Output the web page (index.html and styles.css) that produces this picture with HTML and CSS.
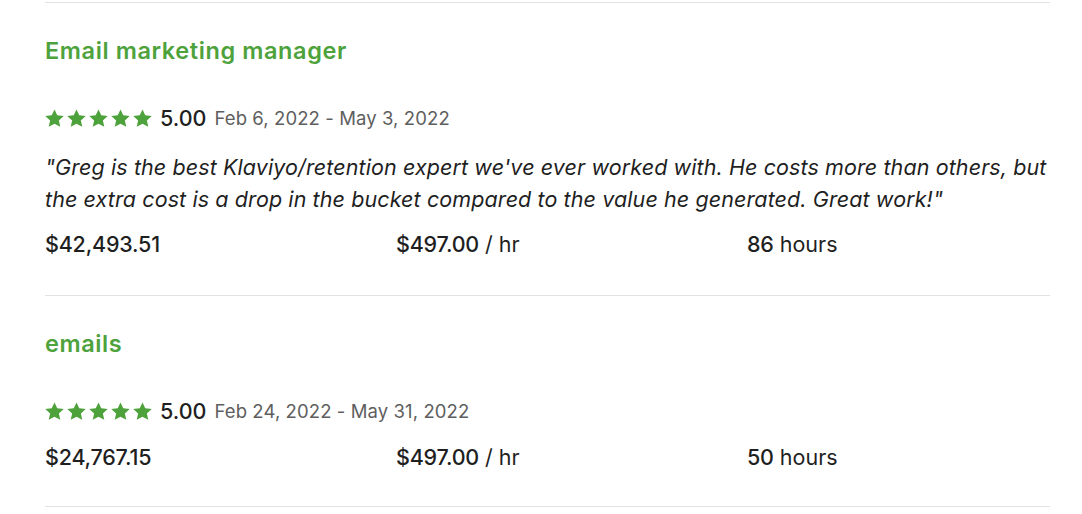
FILE: index.html
```html
<!DOCTYPE html>
<html lang="en">
<head>
    <meta charset="UTF-8">
    <title>Work history</title>
    <link rel="stylesheet" href="styles.css">
</head>
<body>
    <div class="history">
        <div class="job">
            <h4 class="job-title">Email marketing manager</h4>
            <div class="rating">
                <span class="stars">
                    <svg viewBox="0 0 20 20"><path d="M10 .5l2.9 6.2 6.8.7-5.1 4.6 1.5 6.8L10 15.4l-6.1 3.4 1.5-6.8L.3 7.4l6.8-.7z"/></svg>
                    <svg viewBox="0 0 20 20"><path d="M10 .5l2.9 6.2 6.8.7-5.1 4.6 1.5 6.8L10 15.4l-6.1 3.4 1.5-6.8L.3 7.4l6.8-.7z"/></svg>
                    <svg viewBox="0 0 20 20"><path d="M10 .5l2.9 6.2 6.8.7-5.1 4.6 1.5 6.8L10 15.4l-6.1 3.4 1.5-6.8L.3 7.4l6.8-.7z"/></svg>
                    <svg viewBox="0 0 20 20"><path d="M10 .5l2.9 6.2 6.8.7-5.1 4.6 1.5 6.8L10 15.4l-6.1 3.4 1.5-6.8L.3 7.4l6.8-.7z"/></svg>
                    <svg viewBox="0 0 20 20"><path d="M10 .5l2.9 6.2 6.8.7-5.1 4.6 1.5 6.8L10 15.4l-6.1 3.4 1.5-6.8L.3 7.4l6.8-.7z"/></svg>
                </span>
                <strong class="score">5.00</strong>
                <span class="dates">Feb 6, 2022 - May 3, 2022</span>
            </div>
            <p class="feedback">"Greg is the best Klaviyo/retention expert we've ever worked with. He costs more than others, but the extra cost is a drop in the bucket compared to the value he generated. Great work!"</p>
            <div class="stats">
                <span><strong>$42,493.51</strong></span>
                <span><strong>$497.00</strong> / hr</span>
                <span><strong>86</strong> hours</span>
            </div>
        </div>

        <div class="job">
            <h4 class="job-title">emails</h4>
            <div class="rating">
                <span class="stars">
                    <svg viewBox="0 0 20 20"><path d="M10 .5l2.9 6.2 6.8.7-5.1 4.6 1.5 6.8L10 15.4l-6.1 3.4 1.5-6.8L.3 7.4l6.8-.7z"/></svg>
                    <svg viewBox="0 0 20 20"><path d="M10 .5l2.9 6.2 6.8.7-5.1 4.6 1.5 6.8L10 15.4l-6.1 3.4 1.5-6.8L.3 7.4l6.8-.7z"/></svg>
                    <svg viewBox="0 0 20 20"><path d="M10 .5l2.9 6.2 6.8.7-5.1 4.6 1.5 6.8L10 15.4l-6.1 3.4 1.5-6.8L.3 7.4l6.8-.7z"/></svg>
                    <svg viewBox="0 0 20 20"><path d="M10 .5l2.9 6.2 6.8.7-5.1 4.6 1.5 6.8L10 15.4l-6.1 3.4 1.5-6.8L.3 7.4l6.8-.7z"/></svg>
                    <svg viewBox="0 0 20 20"><path d="M10 .5l2.9 6.2 6.8.7-5.1 4.6 1.5 6.8L10 15.4l-6.1 3.4 1.5-6.8L.3 7.4l6.8-.7z"/></svg>
                </span>
                <strong class="score">5.00</strong>
                <span class="dates">Feb 24, 2022 - May 31, 2022</span>
            </div>
            <div class="stats">
                <span><strong>$24,767.15</strong></span>
                <span><strong>$497.00</strong> / hr</span>
                <span><strong>50</strong> hours</span>
            </div>
        </div>
    </div>
</body>
</html>
```

FILE: styles.css
```css
* {
    box-sizing: border-box;
    margin: 0;
    padding: 0;
}
body {
    font-family: Inter, 'Liberation Sans', sans-serif;
    background-color: #fff;
    color: #1f1f1f;
}
.history {
    width: 1005px;
    margin-left: 45px;
    padding-top: 2px;
}
.job {
    border-top: 1px solid #e2e2e2;
    padding: 34px 0 38px;
}
.job:last-child {
    border-bottom: 1px solid #e2e2e2;
    padding-bottom: 36px;
}
.job-title {
    color: #4ea23c;
    font-size: 23.5px;
    font-weight: 600;
    letter-spacing: 0.6px;
    line-height: 28px;
    margin-bottom: 41px;
}
.rating {
    display: flex;
    align-items: center;
    height: 24px;
    margin-bottom: 21px;
}
.rating + .stats {
    margin-top: 7px;
}
.stars {
    display: flex;
    gap: 3px;
    margin-right: 8px;
}
.stars svg {
    width: 19px;
    height: 19px;
    fill: #4ea23c;
}
.score {
    font-size: 21.5px;
    font-weight: 500;
    margin-right: 8px;
}
.dates {
    font-size: 18.5px;
    color: #5e5e5e;
    letter-spacing: 0.1px;
}
.feedback {
    font-size: 21.5px;
    font-style: italic;
    letter-spacing: 0.1px;
    line-height: 32px;
    margin-bottom: 16px;
}
.stats {
    display: grid;
    grid-template-columns: 351px 351px 1fr;
    font-size: 21.5px;
    line-height: 26px;
}
.stats strong {
    font-weight: 500;
    letter-spacing: -0.2px;
}
```
